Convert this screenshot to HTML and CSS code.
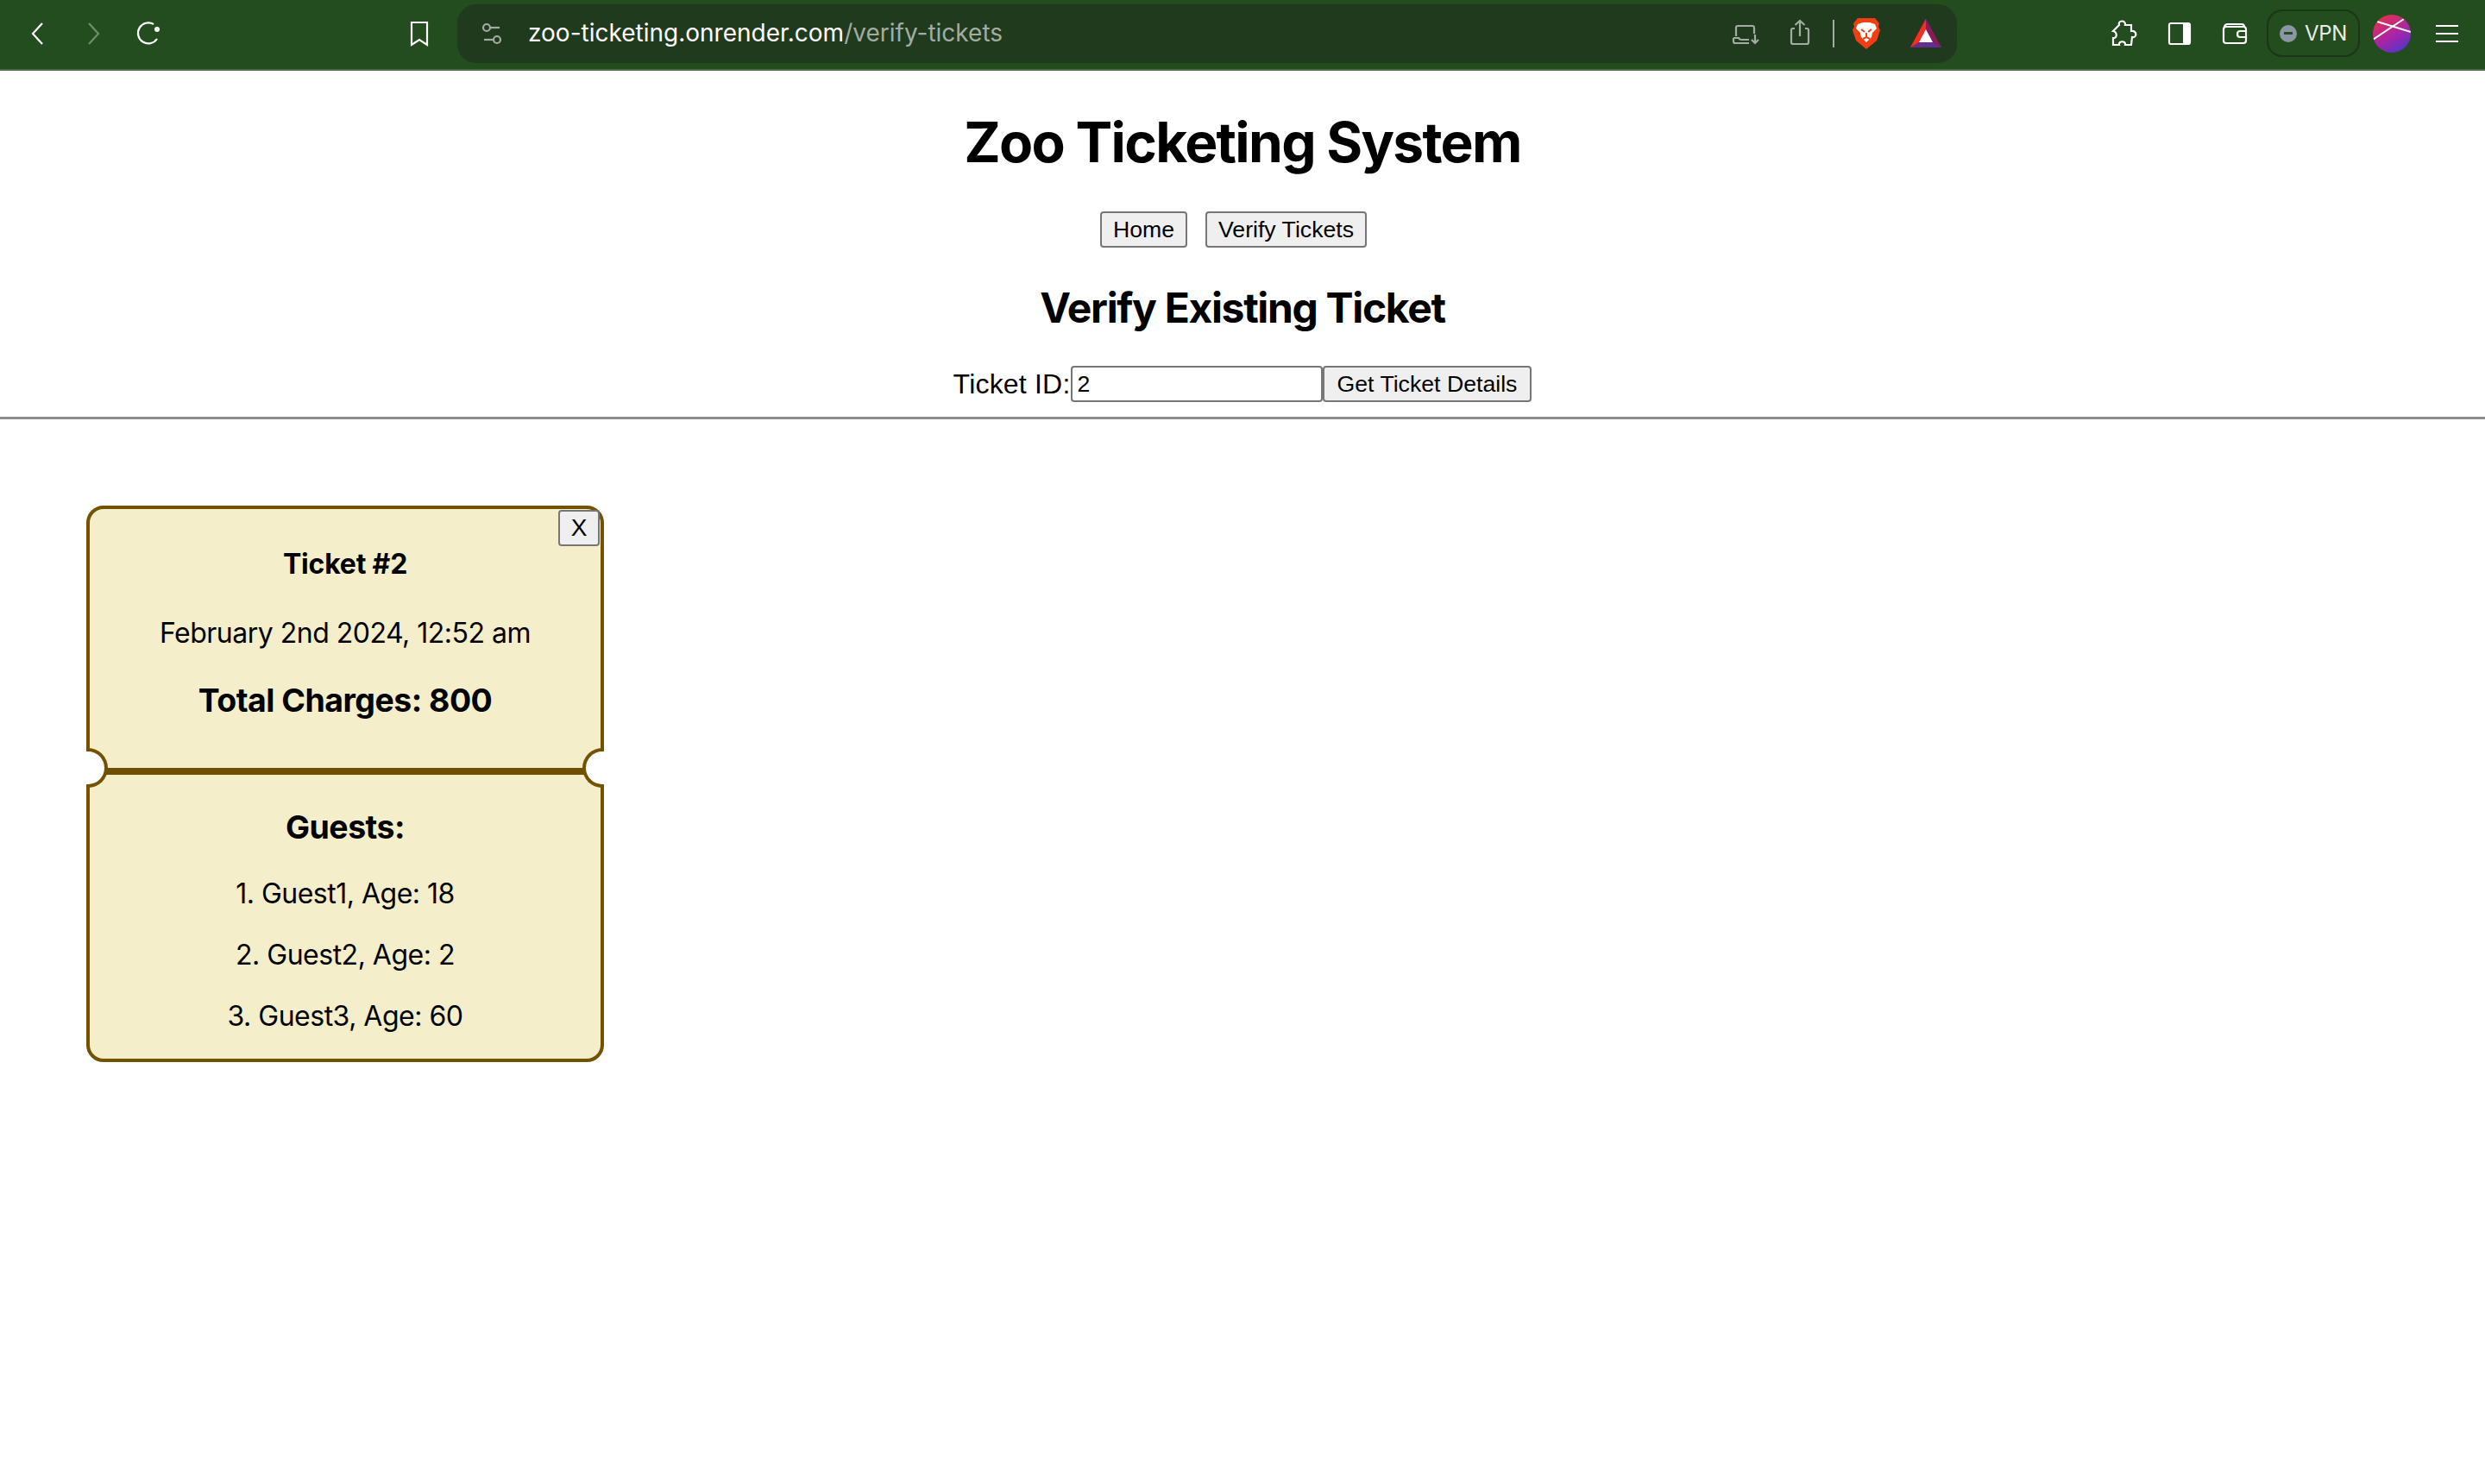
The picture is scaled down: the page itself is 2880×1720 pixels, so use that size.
FILE: index.html
```html
<!DOCTYPE html>
<html lang="en">
<head>
  <meta charset="UTF-8">
  <title>Zoo Ticketing System</title>
  <link rel="stylesheet" href="styles.css">
</head>
<body>

<div class="toolbar">
  <span class="icon back"><svg width="40" height="40" viewBox="0 0 40 40"><path d="M25 8 L14 20 L25 32" class="line"/></svg></span>
  <span class="icon forward"><svg width="40" height="40" viewBox="0 0 40 40"><path d="M15 8 L26 20 L15 32" class="line dim"/></svg></span>
  <span class="icon reload"><svg width="40" height="40" viewBox="0 0 40 40"><path d="M26 9 A12 12 0 1 0 30 26" class="line"/><circle cx="30" cy="15" r="3" fill="#fff"/></svg></span>
  <span class="icon bookmark"><svg width="40" height="40" viewBox="0 0 40 40"><path d="M11 7 H29 V33 L20 27 L11 33 Z" class="line"/></svg></span>

  <div class="urlbar">
    <span class="icon"><svg width="40" height="40" viewBox="0 0 40 40"><g class="line gray"><circle cx="14" cy="13" r="4"/><path d="M18 13 H29"/><circle cx="26" cy="27" r="4"/><path d="M11 27 H22"/></g></svg></span>
    <span class="url">zoo-ticketing.onrender.com<span class="path">/verify-tickets</span></span>
    <div class="url-actions">
      <span class="icon"><svg width="40" height="40" viewBox="0 0 40 40"><g class="line gray"><path d="M9 23 V13 Q9 11 11 11 H28 Q30 11 30 13 V20"/><path d="M6 25 H12 Q13 27 15 27 H24"/><path d="M6 25 V29 Q6 31 8 31 H24"/><path d="M31 21 V31 M27 27 L31 31 L35 27"/></g></svg></span>
      <span class="icon"><svg width="40" height="40" viewBox="0 0 40 40"><g class="line gray"><path d="M14 14 H12 Q10 14 10 16 V30 Q10 32 12 32 H28 Q30 32 30 30 V16 Q30 14 28 14 H26"/><path d="M20 23 V5 M14.500 10 L20 5 L25.500 10"/></g></svg></span>
      <span class="sep"></span>
      <span class="icon"><svg width="40" height="40" viewBox="0 0 40 40"><path d="M10 2 H30 L35 8 L34 12 L36 16 L32 28 L20 38 L8 28 L4 16 L6 12 L5 8 Z" fill="#ef3f12"/><path d="M10 9 L16 7 H24 L30 9 L32 14 L27 19 L26 24 L20 30 L14 24 L13 19 L8 14 Z" fill="#fff"/><path d="M14 15 L18 18 M26 15 L22 18 M20 19 V25 M16 26 L20 24 L24 26" stroke="#ef3f12" stroke-width="2" fill="none"/></svg></span>
      <span class="icon bat"><svg width="40" height="40" viewBox="0 0 40 40"><polygon points="20,3 38,36 2,36" fill="#662d91"/><polygon points="20,3 2,36 12,30 20,15" fill="#ff2b1a"/><polygon points="20,3 38,36 28,30 20,15" fill="#8a1a5a"/><polygon points="20,15 28,30 12,30" fill="#fff"/></svg></span>
    </div>
  </div>

  <span class="icon puzzle"><svg width="40" height="40" viewBox="0 0 40 40"><path d="M16 10 C14 4 24 4 23 10 H30 V17 C37 16 37 25 31 24 L30 33 H23 C24 28 15 28 16 33 H9 V25 C14 26 14 18 9 17 Z" class="line"/></svg></span>
  <span class="icon panel"><svg width="40" height="40" viewBox="0 0 40 40"><rect x="8" y="8" width="24" height="24" rx="2" class="line"/><rect x="24" y="8" width="8" height="24" fill="#fff"/></svg></span>
  <span class="icon wallet"><svg width="40" height="40" viewBox="0 0 40 40"><g class="line"><rect x="7" y="12" width="26" height="19" rx="3"/><path d="M8 13 Q8 9 12 9 H28 Q31 9 31 12"/><path d="M33 17 H26 Q23 17 23 20.500 Q23 24 26 24 H33"/></g></svg></span>
  <div class="vpn"><span class="vpn-dot"></span>VPN</div>
  <span class="avatar"><svg width="44" height="44" viewBox="0 0 44 44"><path d="M5 8 L44 20 M36 5 L0 29" stroke="#fff" stroke-width="2" fill="none"/></svg></span>
  <span class="icon menu"><svg width="40" height="40" viewBox="0 0 40 40"><path d="M7 11 H33 M7 20 H33 M7 29 H33" class="line"/></svg></span>
</div>

<div class="header">
  <h1>Zoo Ticketing System</h1>
  <div class="nav">
    <button>Home</button>
    <button>Verify Tickets</button>
  </div>
  <h2>Verify Existing Ticket</h2>
  <form class="verify-form">
    <label>Ticket ID:</label><input type="text" value="2"><button type="button">Get Ticket Details</button>
  </form>
</div>
<hr>

<div class="tickets">
  <div class="ticket">
    <button class="close">X</button>
    <div class="ticket-top">
      <h4>Ticket #2</h4>
      <p>February 2nd 2024, 12:52 am</p>
      <h3>Total Charges: 800</h3>
    </div>
    <div class="ticket-bottom">
      <h3>Guests:</h3>
      <p>1. Guest1, Age: 18</p>
      <p>2. Guest2, Age: 2</p>
      <p>3. Guest3, Age: 60</p>
    </div>
    <span class="notch left"></span>
    <span class="notch right"></span>
  </div>
</div>

</body>
</html>
```

FILE: styles.css
```css
body {
  margin: 0;
  font-family: Inter, sans-serif;
  background: #fff;
  color: #000;
}

/* browser chrome */
.toolbar {
  display: flex;
  align-items: center;
  height: 77px;
  padding: 0 0 3px 24px;
  background: #234c1f;
  border-bottom: 2px solid #4a6f48;
}
.icon {
  display: flex;
  flex: none;
  width: 40px;
  height: 40px;
}
.line {
  fill: none;
  stroke: #fff;
  stroke-width: 2.200;
}
.line.dim {
  stroke: #6f8e6c;
}
.line.gray {
  stroke: #a3aca2;
}
.forward { margin-left: 24px; }
.reload { margin-left: 24px; }
.bookmark { margin-left: 274px; }
.urlbar {
  display: flex;
  align-items: center;
  width: 1738px;
  height: 68px;
  margin-left: 24px;
  padding: 0 16px 0 20px;
  box-sizing: border-box;
  background: #203a1e;
  border-radius: 22px;
}
.url {
  margin-left: 22px;
  padding-bottom: 2px;
  font-size: 28px;
  color: #fff;
}
.url .path {
  color: #a3aca2;
}
.url-actions {
  display: flex;
  align-items: center;
  margin-left: auto;
}
.url-actions .icon + .icon {
  margin-left: 23px;
}
.sep {
  width: 2px;
  height: 32px;
  margin: 0 17px 0 18px;
  background: #a3aca2;
}
.url-actions .icon.bat {
  margin-left: 29px;
}
.puzzle { margin-left: 172px; }
.panel { margin-left: 26px; }
.wallet { margin-left: 24px; }
.vpn {
  display: flex;
  align-items: center;
  justify-content: center;
  gap: 9px;
  width: 108px;
  height: 55px;
  margin-left: 17px;
  box-sizing: border-box;
  border: 2px solid #1a3518;
  border-radius: 18px;
  font-size: 24px;
  letter-spacing: -0.300px;
  color: #e8ebe8;
}
.vpn-dot {
  position: relative;
  width: 20px;
  height: 20px;
  background: #8b96a3;
  border-radius: 50%;
}
.vpn-dot::after {
  content: "";
  position: absolute;
  left: 5px;
  top: 8.500px;
  width: 10px;
  height: 3px;
  background: #234c1f;
}
.avatar {
  display: flex;
  flex: none;
  width: 44px;
  height: 44px;
  margin-left: 15px;
  overflow: hidden;
  border-radius: 50%;
  background: linear-gradient(150deg, #e6304f 10%, #a824a8 55%, #4438d0 95%);
}
.menu { margin-left: 22px; }

/* page */
.header {
  text-align: center;
}
h1 {
  margin: 0;
  padding-top: 44px;
  font-size: 64px;
  font-weight: 700;
  letter-spacing: -1.700px;
}
.nav {
  display: flex;
  justify-content: center;
  margin-top: 42px;
}
.nav button {
  margin-right: 21px;
}
button {
  height: 42px;
  padding: 0 13px;
  font-family: "Liberation Sans", Arial, sans-serif;
  font-size: 26.670px;
  color: #000;
  background: #efefef;
  border: 2px solid #767676;
  border-radius: 4px;
}
h2 {
  margin: 40px 0 0;
  font-size: 48px;
  font-weight: 700;
  letter-spacing: -1.350px;
}
.verify-form {
  display: flex;
  justify-content: center;
  align-items: center;
  margin-top: 38px;
}
.verify-form label {
  font-family: "Liberation Sans", Arial, sans-serif;
  font-size: 32px;
  letter-spacing: 0.200px;
}
.verify-form input {
  width: 292px;
  height: 42px;
  padding: 2px 6px;
  box-sizing: border-box;
  font-family: "Liberation Sans", Arial, sans-serif;
  font-size: 26.670px;
  border: 2px solid #767676;
  border-radius: 4px;
}
.verify-form button {
  padding: 0 15px;
}
hr {
  height: 3px;
  margin: 17px 0 0;
  border: 0;
  background: #8e8e8e;
}

/* ticket card */
.tickets {
  padding: 100px 0 0 100px;
}
.ticket {
  position: relative;
  box-sizing: border-box;
  width: 600px;
  height: 645px;
  background: #f4eecb;
  border: 4px solid #735300;
  border-radius: 20px;
  text-align: center;
}
.ticket h4 {
  margin: 0;
  padding-top: 44px;
  font-size: 32px;
  letter-spacing: -0.200px;
}
.ticket p {
  margin: 32px 0 0;
  font-size: 32px;
  letter-spacing: -0.500px;
}
.ticket-top {
  height: 300px;
  border-bottom: 8px solid #6f4f00;
}
.ticket-top p {
  margin-top: 41px;
}
.ticket h3 {
  margin: 36px 0 0;
  font-size: 37.440px;
  letter-spacing: -0.500px;
}
.ticket-bottom h3 {
  margin-top: 38px;
  margin-bottom: 35px;
}
.close {
  position: absolute;
  top: 1px;
  right: 1px;
  width: 48px;
  height: 42px;
  padding: 0;
  font-size: 28px;
}
.notch {
  position: absolute;
  top: 277px;
  width: 25px;
  height: 46px;
  box-sizing: border-box;
  background: #fff;
  border: 4px solid #735300;
}
.notch.left {
  left: -4px;
  border-left: 0;
  border-radius: 0 23px 23px 0;
}
.notch.right {
  right: -4px;
  border-right: 0;
  border-radius: 23px 0 0 23px;
}
```
